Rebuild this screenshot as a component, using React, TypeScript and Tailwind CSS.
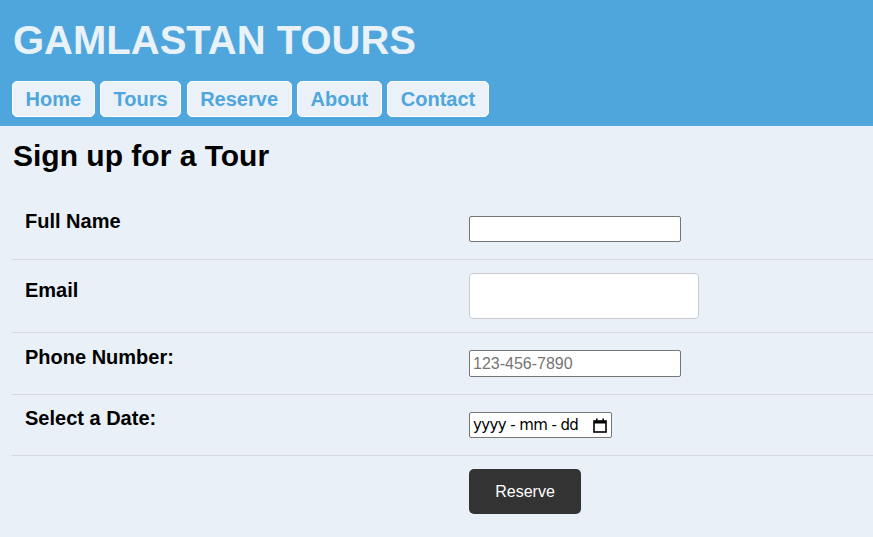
import React from "react";

const navItems = ["Home", "Tours", "Reserve", "About", "Contact"];

export default function App() {
  return (
    <div className="min-h-screen bg-[#e9f0f8] font-['Liberation_Sans',Arial,sans-serif] text-black">
      {/* Header */}
      <header className="bg-[#4ea6dd] px-3 pt-[17px] pb-[9px]">
        <h1 className="pl-px text-[40px] leading-[46px] font-bold text-[#e9f1f9]">
          GAMLASTAN TOURS
        </h1>
        <nav className="mt-[18px] flex gap-[5.5px]">
          {navItems.map((item) => (
            <a
              key={item}
              href="#"
              className="h-[36px] px-[12.5px] border border-white rounded-[5px] bg-[#eaf1f9] text-[20px] leading-[34px] font-bold text-[#4ea6dd]"
            >
              {item}
            </a>
          ))}
        </nav>
      </header>

      <main className="pl-3">
        <h2 className="pt-[13px] pl-px text-[30px] leading-[34px] font-bold">
          Sign up for a Tour
        </h2>

        <form className="mt-[25px]">
          {/* Full name */}
          <div className="flex h-[62px] border-b border-[#d3d9df]">
            <label className="w-[457px] pl-[13px] pt-[12px] text-[20px] leading-[23px] font-bold">
              Full Name
            </label>
            <div className="flex items-center">
              <input
                type="text"
                className="w-[212px] h-[26px] px-[3px] border border-[#767676] rounded-[2px] bg-white text-[16px] outline-none"
              />
            </div>
          </div>

          {/* Email */}
          <div className="flex h-[73px] border-b border-[#d3d9df]">
            <label className="w-[457px] pl-[13px] pt-[19px] text-[20px] leading-[23px] font-bold">
              Email
            </label>
            <div className="flex items-center">
              <input
                type="email"
                className="w-[230px] h-[46px] px-2 border border-[#ccc] rounded-[4px] bg-white text-[16px] outline-none"
              />
            </div>
          </div>

          {/* Phone */}
          <div className="flex h-[62px] border-b border-[#d3d9df]">
            <label className="w-[457px] pl-[13px] pt-[13px] text-[20px] leading-[23px] font-bold">
              Phone Number:
            </label>
            <div className="flex items-center">
              <input
                type="tel"
                placeholder="123-456-7890"
                className="w-[212px] h-[27px] px-[3px] border border-[#767676] rounded-[2px] bg-white text-[16px] placeholder:text-[#757575] outline-none"
              />
            </div>
          </div>

          {/* Date */}
          <div className="flex h-[61px] border-b border-[#d3d9df]">
            <label className="w-[457px] pl-[13px] pt-[12px] text-[20px] leading-[23px] font-bold">
              Select a Date:
            </label>
            <div className="flex items-center">
              <div className="flex items-center justify-between w-[143px] h-[26px] pl-[3px] pr-[4px] border border-[#767676] rounded-[2px] bg-white">
                <span className="whitespace-pre font-['DejaVu_Sans',sans-serif] text-[15px] tracking-[-0.6px]">
                  yyyy - mm - dd
                </span>
                <svg width="14" height="15" viewBox="0 0 14 15" aria-hidden="true">
                  <rect x="1" y="3" width="12" height="11" fill="none" stroke="#000" strokeWidth="1.6" />
                  <rect x="1" y="3" width="12" height="2.5" fill="#000" />
                  <rect x="3" y="0.5" width="1.6" height="3.5" fill="#000" />
                  <rect x="9.4" y="0.5" width="1.6" height="3.5" fill="#000" />
                </svg>
              </div>
            </div>
          </div>

          {/* Submit */}
          <div className="flex pt-[13px] pb-4">
            <div className="w-[457px]" />
            <button
              type="button"
              className="w-[112px] h-[45px] rounded-[5px] bg-[#333] text-white text-[16px]"
            >
              Reserve
            </button>
          </div>
        </form>
      </main>
    </div>
  );
}
